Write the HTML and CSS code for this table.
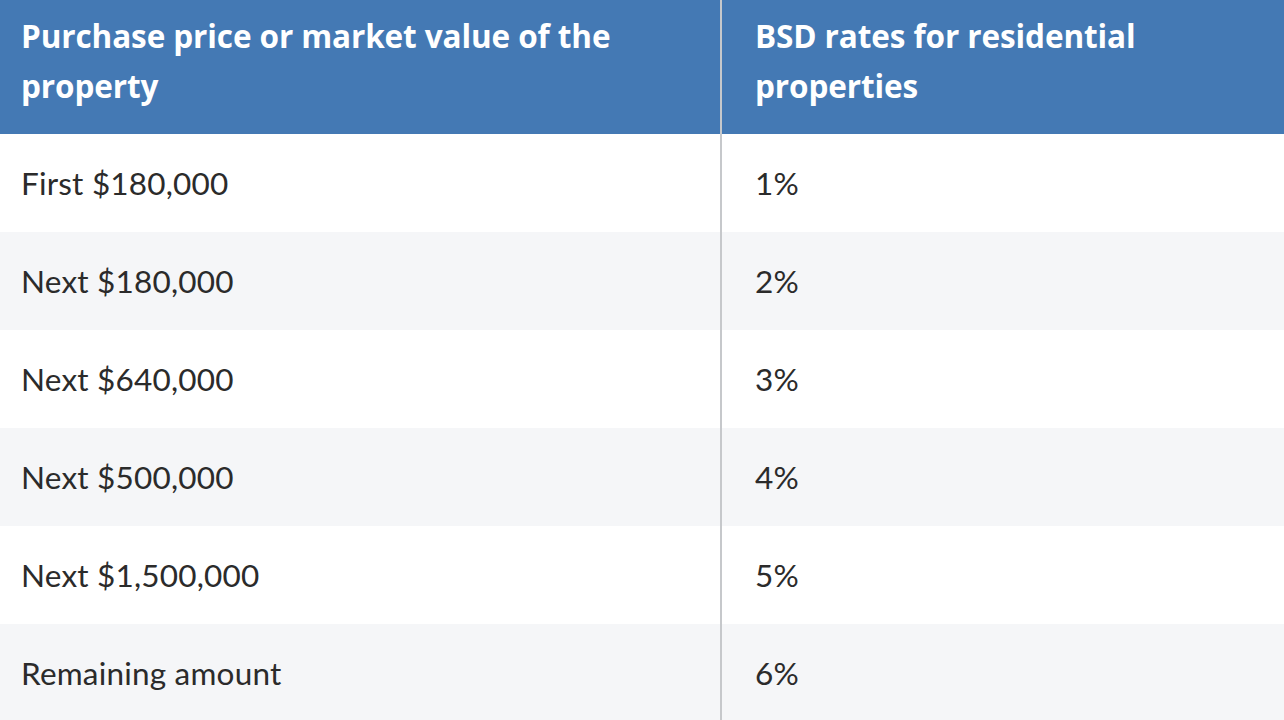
FILE: index.html
```html
<!DOCTYPE html>
<html lang="en">
<head>
<meta charset="utf-8">
<title>BSD rates</title>
<link rel="stylesheet" href="styles.css">
</head>
<body>
<table class="rates">
  <thead>
    <tr>
      <th class="col-a">Purchase price or market value of the property</th>
      <th class="col-b">BSD rates for residential properties</th>
    </tr>
  </thead>
  <tbody>
    <tr><td class="col-a">First $180,000</td><td class="col-b">1%</td></tr>
    <tr><td class="col-a">Next $180,000</td><td class="col-b">2%</td></tr>
    <tr><td class="col-a">Next $640,000</td><td class="col-b">3%</td></tr>
    <tr><td class="col-a">Next $500,000</td><td class="col-b">4%</td></tr>
    <tr><td class="col-a">Next $1,500,000</td><td class="col-b">5%</td></tr>
    <tr><td class="col-a">Remaining amount</td><td class="col-b">6%</td></tr>
  </tbody>
</table>
</body>
</html>
```

FILE: styles.css
```css
html, body {
  margin: 0;
  padding: 0;
  background: #ffffff;
}

body {
  font-family: "Lato", "Open Sans", sans-serif;
  font-variant-ligatures: none;
  color: #2b2b2b;
  overflow: hidden;
}

.rates {
  width: 1284px;
  border-collapse: collapse;
  table-layout: fixed;
}

.rates .col-a {
  width: 721px;
  padding-left: 21px;
  border-right: 2px solid #c6c8cb;
}

.rates .col-b {
  padding-left: 33px;
}

.rates th {
  background: #4479b4;
  color: #ffffff;
  font-family: "Open Sans", "Lato", sans-serif;
  font-weight: 700;
  font-size: 31.5px;
  line-height: 50px;
  letter-spacing: -0.1px;
  text-align: left;
  vertical-align: middle;
  height: 134px;
  padding-top: 0;
  padding-bottom: 12px;
  padding-right: 90px;
  box-sizing: border-box;
}

.rates td {
  font-size: 31.5px;
  letter-spacing: 0.2px;
  height: 98px;
  padding-top: 0;
  padding-bottom: 0;
  box-sizing: border-box;
  vertical-align: middle;
}

.rates tbody tr:nth-child(even) td {
  background: #f5f6f8;
}
```
